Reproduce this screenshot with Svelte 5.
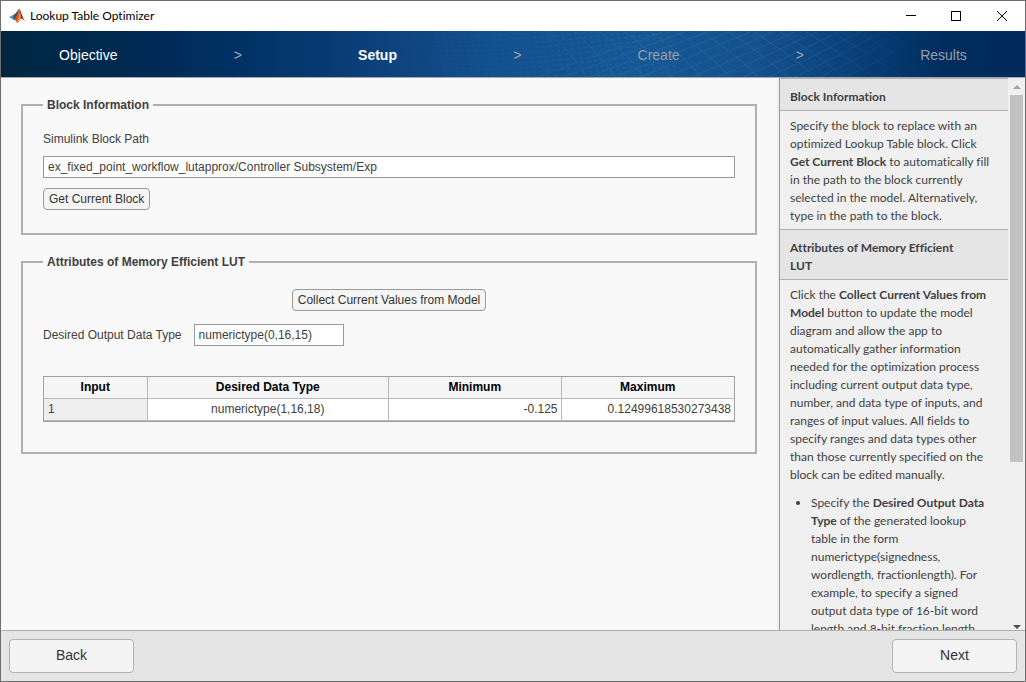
<script>
  const steps = [
    { name: 'Objective', state: 'done' },
    { name: 'Setup', state: 'current' },
    { name: 'Create', state: 'todo' },
    { name: 'Results', state: 'todo' },
  ]

  const rows = [
    { type: 'numerictype(1,16,18)', min: '-0.125', max: '0.12499618530273438' },
  ]

  // Fan of faint crossing lines behind the step bar
  const mesh = Array.from({ length: 16 }, (_, i) => i)

  let blockPath = $state('ex_fixed_point_workflow_lutapprox/Controller Subsystem/Exp')
  let outputType = $state('numerictype(0,16,15)')
</script>

<div class="window">
  <header class="titlebar">
    <svg class="logo" width="16" height="16" viewBox="0 0 16 16" aria-hidden="true">
      <path d="M0 9 L5 6.500 L7 8 L4 11.500 Z" fill="#3f9bd0" />
      <path d="M5 6.500 C7 6 8.500 2 10.500 0.500 L8 9 L5.500 12 L4 11.500 Z" fill="#364e78" />
      <path d="M10.500 0.500 C9.500 4 8 9 4.500 11.500 C6 11.500 7 13 8 15 C10 14 11 11 12 10.500 Z" fill="#d9531e" />
      <path d="M10.500 0.500 C12 3 13.500 10 16 13 C14 11.500 13 10.500 12 10.500 C11.500 7 11 3 10.500 0.500 Z" fill="#8e2416" />
      <path d="M10 4 C10 8 9 12 7.500 14 L8 15 C10 14 11 11 12 10.500 C11.500 8 11 5 10 4 Z" fill="#ef8a3a" />
    </svg>
    <span class="title">Lookup Table Optimizer</span>
    <div class="window-buttons">
      <button aria-label="Minimize">
        <svg width="12" height="12" viewBox="0 0 12 12"><path d="M2 5.500H12" /></svg>
      </button>
      <button aria-label="Maximize">
        <svg width="12" height="12" viewBox="0 0 12 12"><rect x="1.500" y="1.500" width="9" height="9" /></svg>
      </button>
      <button aria-label="Close">
        <svg width="12" height="12" viewBox="0 0 12 12"><path d="M1 1L11 11M11 1L1 11" /></svg>
      </button>
    </div>
  </header>

  <nav class="steps" aria-label="Steps">
    <svg class="mesh" viewBox="0 0 600 46" preserveAspectRatio="none" aria-hidden="true">
      {#each mesh as i}
        <path d={`M${190 + i * 26} 46 Q${245 + i * 25} 26 ${320 + i * 22} 0`} />
        <path d={`M${200 + i * 26} 0 Q${225 + i * 27} 20 ${240 + i * 29} 46`} />
      {/each}
      {#each mesh as i}
        <path class="dots" d={`M${i * 8} ${i * 4 - 6} Q150 ${i * 5 - 4} 330 ${i * 5 - 30}`} />
      {/each}
    </svg>
    {#each steps as step, i}
      {#if i > 0}
        <span class="sep">&gt;</span>
      {/if}
      <span class={`step ${step.state}`}>{step.name}</span>
    {/each}
  </nav>

  <div class="body">
    <main>
      <fieldset class="block-info">
        <legend>Block Information</legend>
        <label for="block-path">Simulink Block Path</label>
        <input id="block-path" type="text" bind:value={blockPath} />
        <button class="small">Get Current Block</button>
      </fieldset>

      <fieldset class="attributes">
        <legend>Attributes of Memory Efficient LUT</legend>
        <div class="collect">
          <button class="small">Collect Current Values from Model</button>
        </div>
        <div class="field">
          <label for="output-type">Desired Output Data Type</label>
          <input id="output-type" type="text" bind:value={outputType} />
        </div>
        <table>
          <thead>
            <tr>
              <th class="col-input">Input</th>
              <th class="col-type">Desired Data Type</th>
              <th class="col-num">Minimum</th>
              <th class="col-num">Maximum</th>
            </tr>
          </thead>
          <tbody>
            {#each rows as row, i}
              <tr>
                <td class="index">{i + 1}</td>
                <td class="type">{row.type}</td>
                <td class="num">{row.min}</td>
                <td class="num">{row.max}</td>
              </tr>
            {/each}
          </tbody>
        </table>
      </fieldset>
    </main>

    <aside>
      <div class="help">
        <h2>Block Information</h2>
        <p>
          Specify the block to replace with an optimized Lookup Table block. Click
          <b>Get Current Block</b> to automatically fill in the path to the block currently
          selected in the model. Alternatively, type in the path to the block.
        </p>
        <h2>Attributes of Memory Efficient LUT</h2>
        <p>
          Click the <b>Collect Current Values from Model</b> button to update the model diagram
          and allow the app to automatically gather information needed for the optimization
          process including current output data type, number, and data type of inputs, and
          ranges of input values. All fields to specify ranges and data types other than those
          currently specified on the block can be edited manually.
        </p>
        <ul>
          <li>
            Specify the <b>Desired Output Data Type</b> of the generated lookup table in the form
            numerictype(signedness, wordlength, fractionlength). For example, to specify a signed
            output data type of 16-bit word length and 8-bit fraction length
          </li>
        </ul>
      </div>
      <div class="scrollbar" aria-hidden="true">
        <svg width="8" height="4" viewBox="0 0 8 4"><path d="M0 4L4 0L8 4Z" fill="#a3a3a3" /></svg>
        <div class="track"><div class="thumb"></div></div>
        <svg width="8" height="4" viewBox="0 0 8 4"><path d="M0 0L4 4L8 0Z" fill="#505050" /></svg>
      </div>
    </aside>
  </div>

  <footer>
    <button class="nav">Back</button>
    <button class="nav">Next</button>
  </footer>
</div>

<style>
  :global(body) { margin: 0; }

  .window {
    box-sizing: border-box;
    height: 100vh;
    display: flex;
    flex-direction: column;
    border: 1px solid #6e6e6e;
    background: #f9f9f9;
    color: #404040;
    font: 12px/14px "Liberation Sans", Arial, sans-serif;
  }

  button, input { box-sizing: border-box; font: inherit; color: inherit; }

  .titlebar {
    flex: none;
    display: flex;
    align-items: center;
    height: 30px;
    padding-left: 8px;
    background: #fff;
    color: #000;
  }
  .title { flex: 1; margin-left: 5px; font: 12px/16px Lato, "Open Sans", sans-serif; font-variant-ligatures: none; }
  .window-buttons { display: flex; }
  .window-buttons button {
    width: 46px;
    height: 30px;
    padding: 0;
    display: grid;
    place-items: center;
    border: 0;
    background: none;
  }
  .window-buttons svg { fill: none; stroke: #000; stroke-width: 1; }

  .steps {
    position: relative;
    flex: none;
    display: flex;
    justify-content: space-around;
    align-items: center;
    height: 46px;
    padding-top: 2px;
    box-sizing: border-box;
    background: linear-gradient(90deg, #00263f 0%, #002a55 15%, #003063 22%, #0a3d76 34%, #13508f 48%, #155795 62%, #15508f 74%, #0a437c 82%, #002d5f 92%, #002b5c 100%);
    font-size: 14px;
    line-height: 16px;
  }
  .mesh {
    position: absolute;
    top: 0;
    left: 34%;
    width: 58%;
    height: 100%;
    fill: none;
    stroke: #6fa0cc;
    opacity: .15;
    mask-image: linear-gradient(90deg, transparent, #000 50%, #000 75%, transparent);
  }
  .mesh .dots { stroke-dasharray: 4 3; }
  .step, .sep { position: relative; }
  .step { color: #9a9fa6; }
  .step.done { color: #fff; }
  .step.current { color: #fff; font-weight: bold; }
  .sep { color: #a3a8ae; }

  .body {
    flex: 1;
    min-height: 0;
    display: flex;
    border-top: 1px solid #a8a8a8;
  }

  main {
    flex: 1;
    display: flex;
    flex-direction: column;
    gap: 20px;
    padding: 20px;
    border-right: 2px solid #eee;
    overflow: auto;
  }

  fieldset {
    min-width: 0;
    margin: 0;
    padding: 20px;
    border: 2px solid #b0b0b0;
  }
  legend { padding: 0 4px; font-weight: bold; }

  input {
    height: 22px;
    padding: 0 4px;
    border: 1px solid #999;
    border-radius: 0;
    background: #fff;
  }

  .small {
    height: 22px;
    padding: 0 5px;
    border: 1px solid #999;
    border-radius: 4px;
    background: #f5f5f5;
    color: #333;
  }

  .block-info {
    display: flex;
    flex-direction: column;
    align-items: flex-start;
    gap: 10px;
    padding-bottom: 23px;
  }
  .block-info input { width: 100%; }

  .attributes { padding-bottom: 30px; }
  .collect { display: flex; justify-content: center; }
  .field {
    display: flex;
    align-items: center;
    gap: 12px;
    margin: 13px 0 30px;
  }
  .field input { width: 150px; }

  table {
    width: 100%;
    table-layout: fixed;
    border-collapse: separate;
    border-spacing: 0;
    border: 1px solid #a0a0a0;
  }
  th, td {
    box-sizing: border-box;
    height: 22px;
    padding: 0 4px 2px;
    border-right: 1px solid #bbb;
    border-bottom: 1px solid #bbb;
  }
  th:last-child, td:last-child { border-right: 0; }
  th { background: #f5f5f5; color: #000; }
  td { background: #fff; }
  .col-input { width: 15%; }
  .col-type { width: 35%; }
  .col-num { width: 25%; }
  .index { background: #eee; }
  .type { text-align: center; }
  .num { padding-right: 3px; text-align: right; }

  aside {
    flex: none;
    display: flex;
    width: 245px;
    border-left: 1px solid #999;
    background: #f0f0f0;
  }
  .help {
    flex: 1;
    overflow-y: auto;
    scrollbar-width: none;
    font: 12px/18px Lato, "Open Sans", sans-serif;
    font-variant-ligatures: none;
  }
  h2 {
    margin: 0;
    padding: 9px 32px 4px 10px;
    border: solid #b0b0b0;
    border-width: 1px 0;
    background: #e5e5e5;
    font: inherit;
    font-weight: bold;
  }
  p { margin: 0; padding: 6px 10px 4px; }
  ul { margin: 0; padding: 6px 18px 6px 31px; }

  .scrollbar {
    flex: none;
    display: flex;
    flex-direction: column;
    align-items: center;
    gap: 6px;
    width: 17px;
    box-sizing: border-box;
    padding: 7px 0 1px;
  }
  .scrollbar svg { flex: none; }
  .track { flex: 1; width: 13px; }
  .thumb { height: 70%; background: #c1c1c1; }

  footer {
    flex: none;
    display: flex;
    justify-content: space-between;
    padding: 8px;
    border-top: 1px solid #b0b0b0;
    background: #e5e5e5;
  }
  .nav {
    width: 125px;
    height: 34px;
    padding: 0 0 2px;
    border: 1px solid #b3b3b3;
    border-radius: 4px;
    background: #f4f4f4;
    color: #333;
    font-size: 14px;
  }
</style>
